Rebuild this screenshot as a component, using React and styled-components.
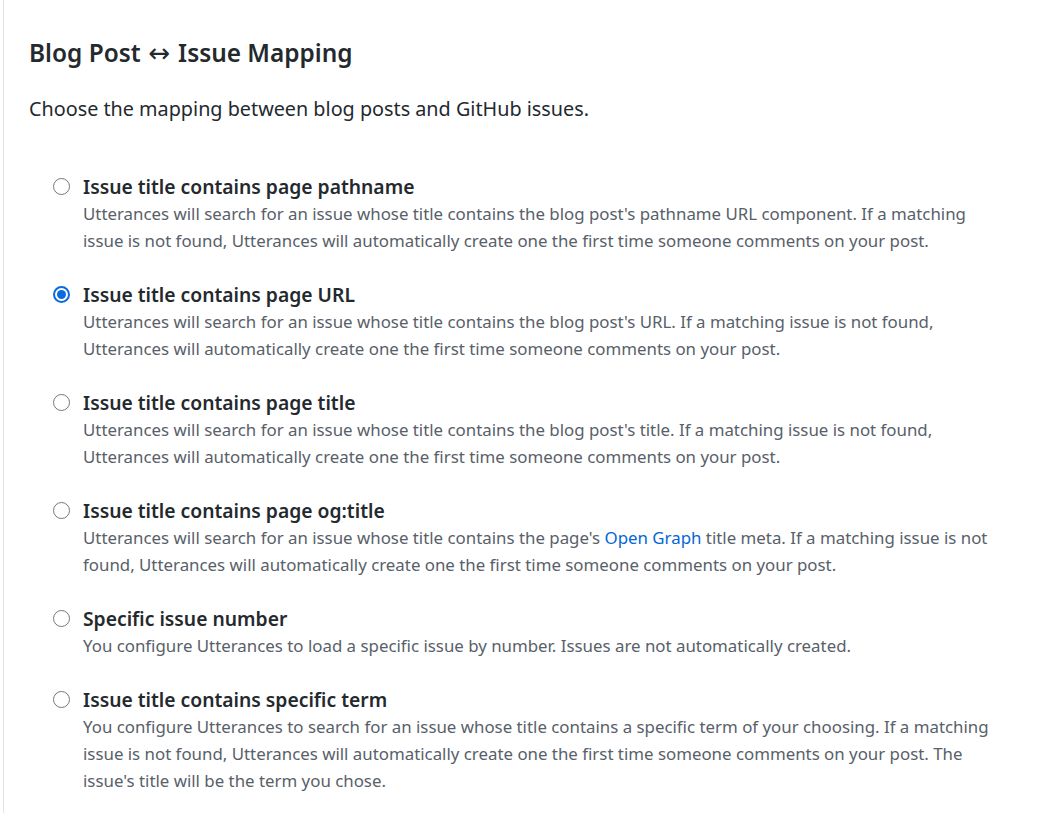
import React, { useState } from "react";
import styled, { createGlobalStyle } from "styled-components";

const GlobalStyle = createGlobalStyle`
  html, body {
    margin: 0;
    padding: 0;
    background: #fff;
  }
  body {
    font-family: "Noto Sans", "Open Sans", sans-serif;
    color: #24292e;
  }
`;

const Page = styled.div`
  margin-left: 3px;
  border-left: 1px solid #e1e4e8;
  min-height: 813px;
  padding: 31px 0 0 25px;
  box-sizing: border-box;
`;

const Heading = styled.h3`
  margin: 0;
  font-size: 24.4px;
  font-weight: 600;
  line-height: 44px;
`;

const Arrow = styled.span`
  font-family: "DejaVu Sans", sans-serif;
  font-weight: 400;
  font-size: 26px;
  margin: 0 1.5px;
`;

const Intro = styled.p`
  margin: 18px 0 0;
  font-size: 19.8px;
  line-height: 32px;
`;

const OptionList = styled.div`
  display: flex;
  flex-direction: column;
  gap: 27px;
  margin-top: 48px;
  padding-left: 24px;
  padding-right: 40px;
`;

const Option = styled.label`
  display: grid;
  grid-template-columns: 30px 1fr;
  cursor: pointer;
`;

const Radio = styled.span`
  width: 17px;
  height: 17px;
  margin-top: 5px;
  box-sizing: border-box;
  border-radius: 50%;
  border: ${(p) => (p.$checked ? "2px solid #0b6bde" : "1px solid #767676")};
  background: #fff;
  display: flex;
  align-items: center;
  justify-content: center;

  &::after {
    content: "";
    display: ${(p) => (p.$checked ? "block" : "none")};
    width: 9px;
    height: 9px;
    border-radius: 50%;
    background: #0b6bde;
  }
`;

const Title = styled.div`
  font-size: 19.3px;
  font-weight: 600;
  line-height: 27px;
`;

const Note = styled.div`
  grid-column: 2;
  font-size: 16.85px;
  line-height: 27px;
  color: #586069;
`;

const Link = styled.a`
  color: #0366d6;
  text-decoration: none;
`;

const options = [
  {
    id: "pathname",
    title: "Issue title contains page pathname",
    note: "Utterances will search for an issue whose title contains the blog post's pathname URL component. If a matching issue is not found, Utterances will automatically create one the first time someone comments on your post.",
  },
  {
    id: "url",
    title: "Issue title contains page URL",
    note: "Utterances will search for an issue whose title contains the blog post's URL. If a matching issue is not found, Utterances will automatically create one the first time someone comments on your post.",
  },
  {
    id: "title",
    title: "Issue title contains page title",
    note: "Utterances will search for an issue whose title contains the blog post's title. If a matching issue is not found, Utterances will automatically create one the first time someone comments on your post.",
  },
  {
    id: "og:title",
    title: "Issue title contains page og:title",
    note: (
      <>
        Utterances will search for an issue whose title contains the page's{" "}
        <Link href="#">Open Graph</Link> title meta. If a matching issue is not
        found, Utterances will automatically create one the first time someone
        comments on your post.
      </>
    ),
  },
  {
    id: "number",
    title: "Specific issue number",
    note: "You configure Utterances to load a specific issue by number. Issues are not automatically created.",
  },
  {
    id: "term",
    title: "Issue title contains specific term",
    note: "You configure Utterances to search for an issue whose title contains a specific term of your choosing. If a matching issue is not found, Utterances will automatically create one the first time someone comments on your post. The issue's title will be the term you chose.",
  },
];

export default function App() {
  const [mapping, setMapping] = useState("url");
  return (
    <Page>
      <GlobalStyle />
      <Heading>
        Blog Post <Arrow>↔</Arrow> Issue Mapping
      </Heading>
      <Intro>Choose the mapping between blog posts and GitHub issues.</Intro>
      <OptionList>
        {options.map((o) => (
          <Option key={o.id} onClick={() => setMapping(o.id)}>
            <Radio $checked={mapping === o.id} />
            <Title>{o.title}</Title>
            <Note>{o.note}</Note>
          </Option>
        ))}
      </OptionList>
    </Page>
  );
}
